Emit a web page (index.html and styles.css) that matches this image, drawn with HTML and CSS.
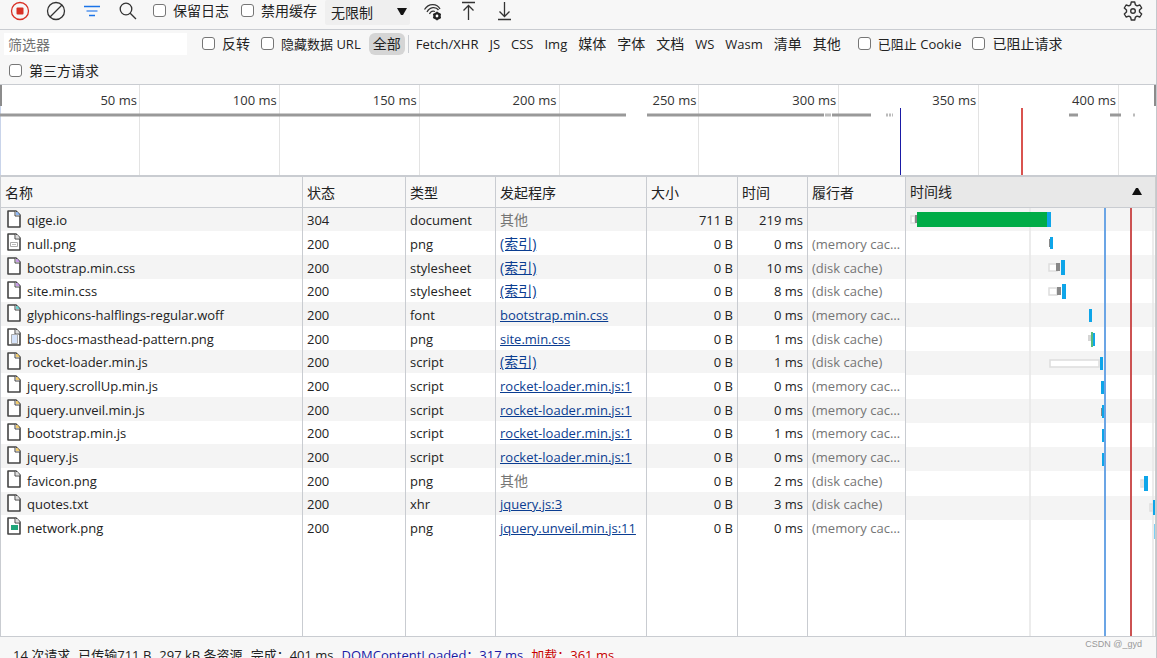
FILE: index.html
```
<!DOCTYPE html>
<html lang="zh-CN">
<head>
  <meta charset="UTF-8" />
  <title>网络</title>
  <link rel="stylesheet" href="styles.css">
</head>
<body>
  <svg class="defs" aria-hidden="true">
    <symbol id="file" viewBox="0 0 14 18">
      <path d="M1 1h8l4 4v12H1z" fill="#fff" stroke="#444" stroke-width="1.6" stroke-linejoin="round" />
      <path d="M8 1v5H13" fill="#fff" stroke="#444" stroke-width="1" />
      <path d="M9 2h1.500L12.500 4.500V5H9z" fill="currentColor" />
    </symbol>
  </svg>

  <!-- Toolbar -->
  <div class="toolbar">
    <button class="icon" aria-label="停止录制">
      <svg width="20" height="20"><circle cx="10" cy="10" r="8.500" fill="none" stroke="#d93025" stroke-width="1.300" /><rect x="6.500" y="6.500" width="7" height="7" rx="1" fill="#d93025" /></svg>
    </button>
    <button class="icon" aria-label="清除">
      <svg width="20" height="20" fill="none" stroke="#333" stroke-width="1.300"><circle cx="10" cy="10" r="8.500" /><path d="M4 16L16 4" /></svg>
    </button>
    <button class="icon" aria-label="筛选">
      <svg width="20" height="20" stroke="#1a73e8" stroke-width="1.300"><path d="M2 5.500h16M7 14.500h6" /><path d="M4.500 10h11" stroke="#7eaef0" stroke-width="2" /></svg>
    </button>
    <button class="icon" aria-label="搜索">
      <svg width="20" height="20" fill="none" stroke="#333" stroke-width="1.300"><circle cx="8" cy="8" r="5.800" /><path d="M12.200 12.200L18 18" /></svg>
    </button>
    <label class="check keep"><input type="checkbox" />保留日志</label>
    <label class="check"><input type="checkbox" />禁用缓存</label>
    <div class="throttle">
      <select aria-label="网络节流"><option>无限制</option></select>
      <svg class="arrow" width="10" height="8"><path d="M0 0h10L6 7H4z" fill="#111" /></svg>
    </div>
    <button class="icon" aria-label="更多网络条件">
      <svg width="20" height="20" viewBox="-1 0 20 20" fill="none" stroke="#333" stroke-width="1.300">
        <path d="M1.500 8.500C5.500 2 14 2 17 8M4 11c2.800-5.500 9-5.500 11.500-2M6.500 13c1-2.800 3.500-3.500 5.500-2.500" />
        <circle cx="14" cy="15" r="2.600" fill="#fff" stroke="#222" stroke-width="2.400" />
        <path d="M14 10.800v1.500M14 17.700v1.500M10.300 12.900l1.400.8M16.300 16.300l1.400.8M10.300 17.100l1.400-.8M16.300 13.700l1.400-.8" stroke="#222" stroke-width="1.700" />
      </svg>
    </button>
    <button class="icon" aria-label="导入 HAR 文件">
      <svg width="20" height="20" fill="none" stroke="#333" stroke-width="1.300"><path d="M4 1.500h13M10.500 19V4.500M5.500 9.500l5-5 5 5" /></svg>
    </button>
    <button class="icon" aria-label="导出 HAR 文件">
      <svg width="20" height="20" fill="none" stroke="#333" stroke-width="1.300"><path d="M4 18.500h13M10.500 1v14.500M5.500 10.500l5 5 5-5" /></svg>
    </button>
    <button class="icon settings" aria-label="设置">
      <svg width="20" height="20" fill="none" stroke="#333" stroke-width="1.400" stroke-linejoin="round"><path d="M8.300 1h3.400l.7 2.900 1.700 1 2.800-.9 1.800 3-2.200 2v2l2.200 2-1.800 3-2.800-.9-1.700 1-.7 2.900H8.300l-.7-2.900-1.700-1-2.800.9-1.800-3 2.200-2V9l-2.200-2 1.800-3 2.800.9 1.700-1z" /><circle cx="10" cy="10" r="2.300" /></svg>
    </button>
  </div>

  <!-- Filters -->
  <div class="filters">
    <input class="search" type="text" placeholder="筛选器" aria-label="筛选器" />
    <label class="check"><input type="checkbox" />反转</label>
    <label class="check mixed"><input type="checkbox" />隐藏数据 URL</label>
    <div class="types">
      <button class="zh active">全部</button>
      <span class="divider"></span>
      <button>Fetch/XHR</button>
      <button>JS</button>
      <button>CSS</button>
      <button>Img</button>
      <button class="zh">媒体</button>
      <button class="zh">字体</button>
      <button class="zh">文档</button>
      <button>WS</button>
      <button>Wasm</button>
      <button class="zh">清单</button>
      <button class="zh">其他</button>
    </div>
    <label class="check mixed"><input type="checkbox" />已阻止 Cookie</label>
    <label class="check"><input type="checkbox" />已阻止请求</label>
    <label class="check third"><input type="checkbox" />第三方请求</label>
  </div>

  <!-- Overview -->
  <div class="overview">
    <div class="tick">50 ms</div>
    <div class="tick">100 ms</div>
    <div class="tick">150 ms</div>
    <div class="tick">200 ms</div>
    <div class="tick">250 ms</div>
    <div class="tick">300 ms</div>
    <div class="tick">350 ms</div>
    <div class="tick">400 ms</div>
    <svg class="tracks" viewBox="0 0 1156 90" preserveAspectRatio="none">
      <path d="M0 30H626M647 30H824M832 30H871M1069 30h9M1110 30h11" stroke="#999" stroke-width="3" />
      <path d="M825 30h6M886 30h2M889 30h2M892 30h1M1133 30h2" stroke="#bbb" stroke-width="3" />
      <path d="M900.500 23v67" stroke="#1a1aa6" />
      <path d="M1022 23v67" stroke="#d9534f" stroke-width="2" />
      <path d="M1 0v21M1155 0v21" stroke="#8c8c8c" stroke-width="2" />
    </svg>
  </div>

  <!-- Requests -->
  <div class="panel">
    <table class="requests">
      <colgroup>
        <col />
        <col class="c-status" />
        <col class="c-type" />
        <col class="c-initiator" />
        <col class="c-size" />
        <col class="c-time" />
        <col class="c-served" />
      </colgroup>
      <thead>
        <tr><th>名称</th><th>状态</th><th>类型</th><th>发起程序</th><th>大小</th><th>时间</th><th>履行者</th></tr>
      </thead>
      <tbody>
        <tr><td><svg class="file doc"><use href="#file" /></svg>qige.io</td><td>304</td><td>document</td><td class="dim zh">其他</td><td class="num">711 B</td><td class="num">219 ms</td><td class="dim"></td></tr>
        <tr><td><svg class="file"><use href="#file" /><path d="M3.500 9.500h7v4h-7z" fill="#fff" stroke="#aaa" /><path d="M5 11.500h4" stroke="#bbb" /></svg>null.png</td><td>200</td><td>png</td><td><a class="zh" href="#">(索引)</a></td><td class="num">0 B</td><td class="num">0 ms</td><td class="dim">(memory cache)</td></tr>
        <tr><td><svg class="file css"><use href="#file" /></svg>bootstrap.min.css</td><td>200</td><td>stylesheet</td><td><a class="zh" href="#">(索引)</a></td><td class="num">0 B</td><td class="num">10 ms</td><td class="dim">(disk cache)</td></tr>
        <tr><td><svg class="file css"><use href="#file" /></svg>site.min.css</td><td>200</td><td>stylesheet</td><td><a class="zh" href="#">(索引)</a></td><td class="num">0 B</td><td class="num">8 ms</td><td class="dim">(disk cache)</td></tr>
        <tr><td><svg class="file font"><use href="#file" /></svg>glyphicons-halflings-regular.woff</td><td>200</td><td>font</td><td><a href="#">bootstrap.min.css</a></td><td class="num">0 B</td><td class="num">0 ms</td><td class="dim">(memory cache)</td></tr>
        <tr><td><svg class="file"><use href="#file" /><path d="M4.500 6.500h6v9h-6z" fill="#d5e3fa" stroke="#aaa" /></svg>bs-docs-masthead-pattern.png</td><td>200</td><td>png</td><td><a href="#">site.min.css</a></td><td class="num">0 B</td><td class="num">1 ms</td><td class="dim">(disk cache)</td></tr>
        <tr><td><svg class="file js"><use href="#file" /></svg>rocket-loader.min.js</td><td>200</td><td>script</td><td><a class="zh" href="#">(索引)</a></td><td class="num">0 B</td><td class="num">1 ms</td><td class="dim">(disk cache)</td></tr>
        <tr><td><svg class="file js"><use href="#file" /></svg>jquery.scrollUp.min.js</td><td>200</td><td>script</td><td><a href="#">rocket-loader.min.js:1</a></td><td class="num">0 B</td><td class="num">0 ms</td><td class="dim">(memory cache)</td></tr>
        <tr><td><svg class="file js"><use href="#file" /></svg>jquery.unveil.min.js</td><td>200</td><td>script</td><td><a href="#">rocket-loader.min.js:1</a></td><td class="num">0 B</td><td class="num">0 ms</td><td class="dim">(memory cache)</td></tr>
        <tr><td><svg class="file js"><use href="#file" /></svg>bootstrap.min.js</td><td>200</td><td>script</td><td><a href="#">rocket-loader.min.js:1</a></td><td class="num">0 B</td><td class="num">1 ms</td><td class="dim">(memory cache)</td></tr>
        <tr><td><svg class="file js"><use href="#file" /></svg>jquery.js</td><td>200</td><td>script</td><td><a href="#">rocket-loader.min.js:1</a></td><td class="num">0 B</td><td class="num">0 ms</td><td class="dim">(memory cache)</td></tr>
        <tr><td><svg class="file"><use href="#file" /></svg>favicon.png</td><td>200</td><td>png</td><td class="dim zh">其他</td><td class="num">0 B</td><td class="num">2 ms</td><td class="dim">(disk cache)</td></tr>
        <tr><td><svg class="file"><use href="#file" /></svg>quotes.txt</td><td>200</td><td>xhr</td><td><a href="#">jquery.js:3</a></td><td class="num">0 B</td><td class="num">3 ms</td><td class="dim">(disk cache)</td></tr>
        <tr><td><svg class="file"><use href="#file" /><path d="M4 8h7v5H4z" fill="#1fa67a" /></svg>network.png</td><td>200</td><td>png</td><td><a href="#">jquery.unveil.min.js:11</a></td><td class="num">0 B</td><td class="num">0 ms</td><td class="dim">(memory cache)</td></tr>
        <tr class="filler"><td></td><td></td><td></td><td></td><td></td><td></td><td></td></tr>
      </tbody>
    </table>

    <div class="waterfall">
      <button class="waterfall-head">时间线<svg width="10" height="8"><path d="M4 0h2l4 7H0z" fill="#111" /></svg></button>
      <svg class="bars">
        <path d="M0 11h250M0 59h250M0 107h250M0 155h250M0 203h250M0 251h250M0 300h250" stroke="#f4f4f4" stroke-width="24" />
        <path d="M124 0v428M247 0v428" stroke="#e6e6e6" stroke-width="1.500" />
        <!-- waiting in the queue -->
        <g fill="#fff" stroke="#ddd" stroke-width="1.500">
          <rect x="5" y="8" width="4" height="7" />
          <rect x="143" y="56" width="8" height="7" />
          <rect x="143" y="80" width="8" height="7" />
          <rect x="144" y="152" width="49" height="7" />
          <rect x="235" y="272" width="2" height="7" />
          <rect x="244" y="296" width="2" height="7" />
        </g>
        <path d="M9 7h2v8H9zM150 55h4v8h-4zM151 79h4v8h-4zM143 31h2v8h-2zM195 200h2v8h-2z" fill="#888" />
        <path d="M182 127h3v6h-3z" fill="#d5d5d5" />
        <path d="M11 4h131v15H11z" fill="#00ac47" />
        <path d="M185 124h2v15h-2z" fill="#58bd7d" />
        <!-- content download -->
        <path d="M141 4h4v15h-4zM144 29h3v12h-3zM155 52h4v15h-4zM156 76h4v15h-4zM183 101h3v13h-3zM187 125h2v13h-2zM194 149h3v13h-3zM195 173h4v13h-4zM196 197h3v13h-3zM196 221h3v13h-3zM196 245h3v13h-3zM238 268h4v15h-4zM247 292h4v15h-4z" fill="#0ea5e9" />
        <path d="M248 316h2v15h-2z" fill="#7ccff5" />
        <path d="M199 0v428" stroke="#6ba5e5" stroke-width="2" />
        <path d="M225 0v428" stroke="#cc5252" stroke-width="2" />
      </svg>
    </div>
  </div>

  <!-- Summary -->
  <div class="summary">
    <span>14 次请求</span>
    <span>已传输711 B</span>
    <span>297 kB 条资源</span>
    <span>完成：401 ms</span>
    <span class="dcl">DOMContentLoaded：317 ms</span>
    <span class="load">加载：361 ms</span>
    <div class="watermark">CSDN @_gyd</div>
  </div>
</body>
</html>
```
FILE: styles.css
```
* {
  box-sizing: border-box;
}
body {
  margin: 0;
  height: 100vh;
  overflow: hidden;
  display: flex;
  flex-direction: column;
  background: #f7f7f7;
  border-right: 1px solid #c4c7cc;
  font-family: "Open Sans", "Noto Sans CJK SC", sans-serif;
  font-size: 13px;
  line-height: 20px;
  color: #222;
}
button,
input,
select {
  font: inherit;
  color: inherit;
}
button {
  border: 0;
  background: none;
  padding: 0;
}
.defs {
  position: absolute;
  width: 0;
  height: 0;
}
.zh {
  font-size: 14px;
}

/* Toolbar */
.toolbar {
  display: flex;
  align-items: flex-start;
  gap: 16px;
  height: 30px;
  flex: none;
  padding: 1px 13px 0 10px;
  border-bottom: 1px solid #c9ccd1;
}
.icon {
  width: 20px;
  height: 20px;
  flex: none;
}
.icon svg {
  display: block;
}
.check {
  display: flex;
  align-items: center;
  gap: 7px;
  font-size: 14px;
  white-space: nowrap;
}
.check input {
  appearance: none;
  width: 13px;
  height: 13px;
  margin: 0 0 2px;
  border: 1px solid #767676;
  border-radius: 3px;
  background: #fff;
}
.mixed {
  font-size: 13px;
}
.toolbar .check {
  margin-right: -4px;
}
.keep {
  margin-left: -1px;
}
.throttle {
  position: relative;
  margin: -1px -4px 0;
}
.throttle select {
  display: block;
  appearance: none;
  width: 85px;
  height: 25px;
  padding: 0 6px;
  border: 0;
  border-radius: 2px;
  background: #efefef;
  font-size: 14px;
}
.arrow {
  position: absolute;
  right: 3px;
  top: 8px;
  pointer-events: none;
}
.settings {
  margin-left: auto;
}

/* Filters */
.filters {
  display: flex;
  flex-wrap: wrap;
  align-items: center;
  column-gap: 11px;
  row-gap: 4px;
  flex: none;
  height: 55px;
  padding: 2px 4px;
  border-bottom: 1px solid #c9ccd1;
}
.search {
  width: 183px;
  height: 22px;
  padding: 0 4px;
  margin-right: 4px;
  border: 0;
  background: #fff;
  font-size: 14px;
}
.search::placeholder {
  color: #757575;
}
.types {
  display: flex;
  align-items: center;
  gap: 3px;
  margin: 0 2px 0 -3px;
}
.types button {
  padding: 0 4px;
  line-height: 22px;
  border-radius: 6px;
}
.types .active {
  background: #d5d5d5;
}
.divider {
  width: 1px;
  height: 18px;
  background: #c9ccd1;
}
.third {
  margin-left: 5px;
}

/* Overview */
.overview {
  position: relative;
  display: flex;
  flex: none;
  height: 90px;
  background: #fff;
  box-shadow: inset 1px 0 #c9d4ea;
}
.tick {
  width: 12.1%;
  padding: 5px 2px 0 0;
  border-right: 1px solid #e3e3e3;
  text-align: right;
  color: #333;
}
.tracks {
  position: absolute;
  inset: 0;
  width: 100%;
  height: 100%;
}

/* Requests */
.panel {
  display: flex;
  flex: 1;
  min-height: 0;
  background: #fff;
  border-top: 2px solid #c9ccd1;
  border-left: 1px solid #c9ccd1;
}
.requests {
  flex: 1;
  width: 0;
  height: 100%;
  table-layout: fixed;
  border-collapse: separate;
  border-spacing: 0;
}
.c-status { width: 103px; }
.c-type { width: 90px; }
.c-initiator { width: 151px; }
.c-size { width: 91px; }
.c-time { width: 70px; }
.c-served { width: 98px; }
.requests th {
  height: 31px;
  padding: 2px 4px 0;
  border-right: 1px solid #c9ccd1;
  border-bottom: 1px solid #c9ccd1;
  background: #f7f7f7;
  font-size: 14px;
  font-weight: normal;
  text-align: left;
}
.requests td {
  height: 24px;
  padding: 1px 4px 0;
  border-right: 1px solid #c9ccd1;
  overflow: hidden;
  white-space: nowrap;
  text-overflow: ellipsis;
}
.requests tr:nth-child(3n+1) td {
  height: 23px;
}
.requests tbody tr:nth-child(odd) {
  background: #f4f4f4;
}
.requests td:first-child {
  padding-left: 6px;
}
.requests tbody tr.filler {
  background: #fff;
}
.requests .filler td {
  height: auto;
}
.requests .num {
  text-align: right;
}
.requests .dim {
  color: #757575;
}
.requests a {
  color: #0b3d91;
}
.file {
  width: 14px;
  height: 18px;
  margin: -6px 6px 0 0;
  vertical-align: middle;
  color: #ddd;
}
.file.doc { color: #8fb8f5; }
.file.css { color: #c79be6; }
.file.font { color: #6fd0d0; }
.file.js { color: #f2cd70; }
.waterfall {
  flex: 0 0 250px;
  display: flex;
  flex-direction: column;
  overflow: hidden;
  border-right: 1px solid #ccc;
}
.waterfall-head {
  display: flex;
  align-items: center;
  justify-content: space-between;
  flex: none;
  height: 31px;
  padding: 0 13px 0 4px;
  border-bottom: 1px solid #c9ccd1;
  background: #e8e8e8;
  font-size: 14px;
}
.bars {
  display: block;
  flex: 1;
  width: 100%;
  min-height: 0;
}

/* Summary */
.summary {
  position: relative;
  display: flex;
  gap: 8px;
  flex: none;
  height: 22px;
  padding: 8px 0 0 13px;
  border-top: 1px solid #c9ccd1;
  white-space: nowrap;
}
.dcl {
  color: #1a1aa6;
}
.load {
  color: #c80000;
}
.watermark {
  position: absolute;
  right: 14px;
  top: 0;
  font: 9px/14px "Liberation Sans", sans-serif;
  color: #999;
}
```
